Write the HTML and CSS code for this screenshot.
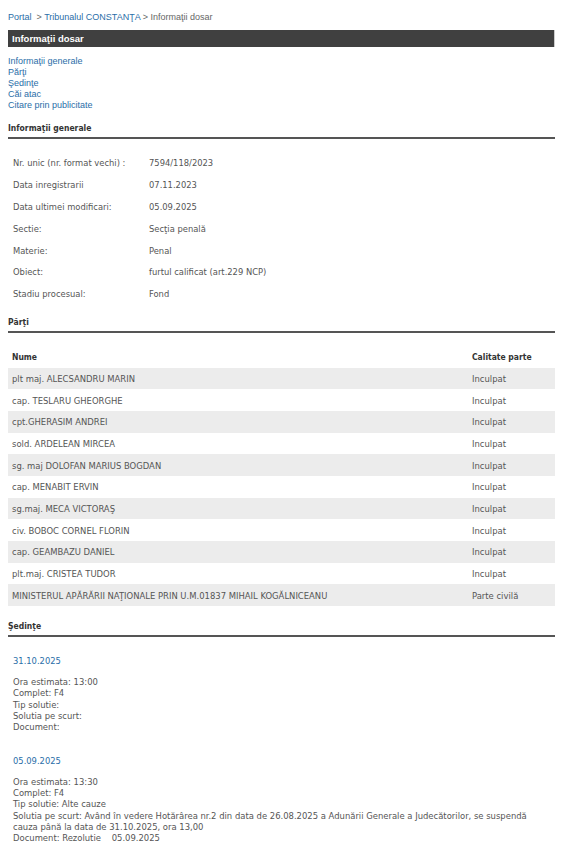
FILE: index.html
```html
<!DOCTYPE html>
<html lang="ro">
<head>
  <meta charset="UTF-8">
  <title>Informaţii dosar</title>
  <meta name="viewport" content="width=device-width, initial-scale=1.0">
  <link rel="stylesheet" href="styles.css">
</head>
<body>
  <div class="page">

    <!-- breadcrumb -->
    <div class="crumbs">
      <a href="#">Portal</a> &nbsp;<span>&gt;</span> <a href="#">Tribunalul CONSTANŢA</a> <span>&gt; Informaţii dosar</span>
    </div>

    <div class="title-bar">Informaţii dosar</div>

    <!-- ancore -->
    <div class="anchors">
      <a href="#generale">Informaţii generale</a>
      <a href="#parti">Părţi</a>
      <a href="#sedinte">Şedinţe</a>
      <a href="#cai">Căi atac</a>
      <a href="#citare">Citare prin publicitate</a>
    </div>

    <!-- informatii generale -->
    <h3 class="section-title" id="generale">Informaţii generale</h3>
    <table class="info">
      <tr><td class="lbl">Nr. unic (nr. format vechi) :</td><td>7594/118/2023</td></tr>
      <tr><td class="lbl">Data inregistrarii</td><td>07.11.2023</td></tr>
      <tr><td class="lbl">Data ultimei modificari:</td><td>05.09.2025</td></tr>
      <tr><td class="lbl">Sectie:</td><td>Secţia penală</td></tr>
      <tr><td class="lbl">Materie:</td><td>Penal</td></tr>
      <tr><td class="lbl">Obiect:</td><td>furtul calificat (art.229 NCP)</td></tr>
      <tr><td class="lbl">Stadiu procesual:</td><td>Fond</td></tr>
    </table>

    <!-- parti -->
    <h3 class="section-title" id="parti">Părţi</h3>
    <table class="parti">
      <thead>
        <tr><th>Nume</th><th class="cal">Calitate parte</th></tr>
      </thead>
      <tbody>
        <tr><td>plt maj. ALECSANDRU MARIN</td><td class="cal">Inculpat</td></tr>
        <tr><td>cap. TESLARU GHEORGHE</td><td class="cal">Inculpat</td></tr>
        <tr><td>cpt.GHERASIM ANDREI</td><td class="cal">Inculpat</td></tr>
        <tr><td>sold. ARDELEAN MIRCEA</td><td class="cal">Inculpat</td></tr>
        <tr><td>sg. maj DOLOFAN MARIUS BOGDAN</td><td class="cal">Inculpat</td></tr>
        <tr><td>cap. MENABIT ERVIN</td><td class="cal">Inculpat</td></tr>
        <tr><td>sg.maj. MECA VICTORAŞ</td><td class="cal">Inculpat</td></tr>
        <tr><td>civ. BOBOC CORNEL FLORIN</td><td class="cal">Inculpat</td></tr>
        <tr><td>cap. GEAMBAZU DANIEL</td><td class="cal">Inculpat</td></tr>
        <tr><td>plt.maj. CRISTEA TUDOR</td><td class="cal">Inculpat</td></tr>
        <tr><td>MINISTERUL APĂRĂRII NAŢIONALE PRIN U.M.01837 MIHAIL KOGĂLNICEANU</td><td class="cal">Parte civilă</td></tr>
      </tbody>
    </table>

    <!-- sedinte -->
    <h3 class="section-title after-table" id="sedinte">Şedinţe</h3>

    <div class="sedinta">
      <div class="data">31.10.2025</div>
      <div class="detalii">
        Ora estimata: 13:00<br>
        Complet: F4<br>
        Tip solutie: <br>
        Solutia pe scurt: <br>
        Document:
      </div>
    </div>

    <div class="sedinta">
      <div class="data">05.09.2025</div>
      <div class="detalii">
        Ora estimata: 13:30<br>
        Complet: F4<br>
        Tip solutie: Alte cauze<br>
        Solutia pe scurt: Având în vedere Hotărârea nr.2 din data de 26.08.2025 a Adunării Generale a Judecătorilor, se suspendă cauza până la data de 31.10.2025, ora 13,00<br>
        Document: Rezolutie &nbsp;&nbsp; 05.09.2025
      </div>
    </div>

  </div>
</body>
</html>
```

FILE: styles.css
```css
/* ==== Base ==== */
body { margin:0; background:#fff; color:#555; font-family:"Liberation Sans", Arial, sans-serif; }
a { color:#2a6ea8; text-decoration:none; }

.page { width:547px; padding:11px 0 0 8px; }

/* ==== breadcrumb ==== */
.crumbs { font-size:9px; line-height:12px; color:#666; }
.crumbs span { color:#666; }

/* ==== bara titlu ==== */
.title-bar {
  margin-top:7px; height:17px; line-height:17px;
  background:#404040; color:#fff;
  font-size:9.5px; font-weight:bold; padding-left:4px;
  border-right:1px solid #ccc;
}

/* ==== ancore ==== */
.anchors { margin-top:9px; display:flex; flex-direction:column; }
.anchors a { font-size:9px; line-height:11px; }

/* ==== titluri sectiuni ==== */
.section-title {
  margin:11px 0 0; padding:0 0 3px 0;
  font-family:"DejaVu Sans Condensed", "DejaVu Sans", sans-serif;
  font-size:8.5px; line-height:12px; font-weight:bold; color:#333;
  border-bottom:2px solid #555;
}
.section-title.after-table { margin-top:14px; }

/* ==== informatii generale ==== */
.info { border-collapse:collapse; margin-top:13px; font-family:"DejaVu Sans Condensed", "DejaVu Sans", sans-serif; font-size:9.3px; color:#555; }
.info td { height:21.8px; padding:0 0 0 5px; }
.info td.lbl { width:131px; }

/* ==== parti ==== */
.parti { width:100%; border-collapse:collapse; margin-top:13px; font-family:"DejaVu Sans Condensed", "DejaVu Sans", sans-serif; font-size:9.4px; color:#555; }
.parti th { text-align:left; font-weight:bold; font-size:8.5px; color:#333; height:22px; padding:0 0 0 4px; }
.parti td { height:21.7px; padding:0 0 0 4px; }
.parti tbody tr:nth-child(odd) { background:#ececec; }
.parti .cal { width:83px; }

/* ==== sedinte ==== */
.sedinta { padding:18px 14px 0 5px; font-family:"DejaVu Sans Condensed", "DejaVu Sans", sans-serif; font-size:9.4px; color:#555; }
.sedinta .data { color:#2a6ea8; font-size:9.3px; line-height:12px; }
.sedinta .detalii { margin-top:9px; line-height:11.3px; padding-bottom:4px; }
```
